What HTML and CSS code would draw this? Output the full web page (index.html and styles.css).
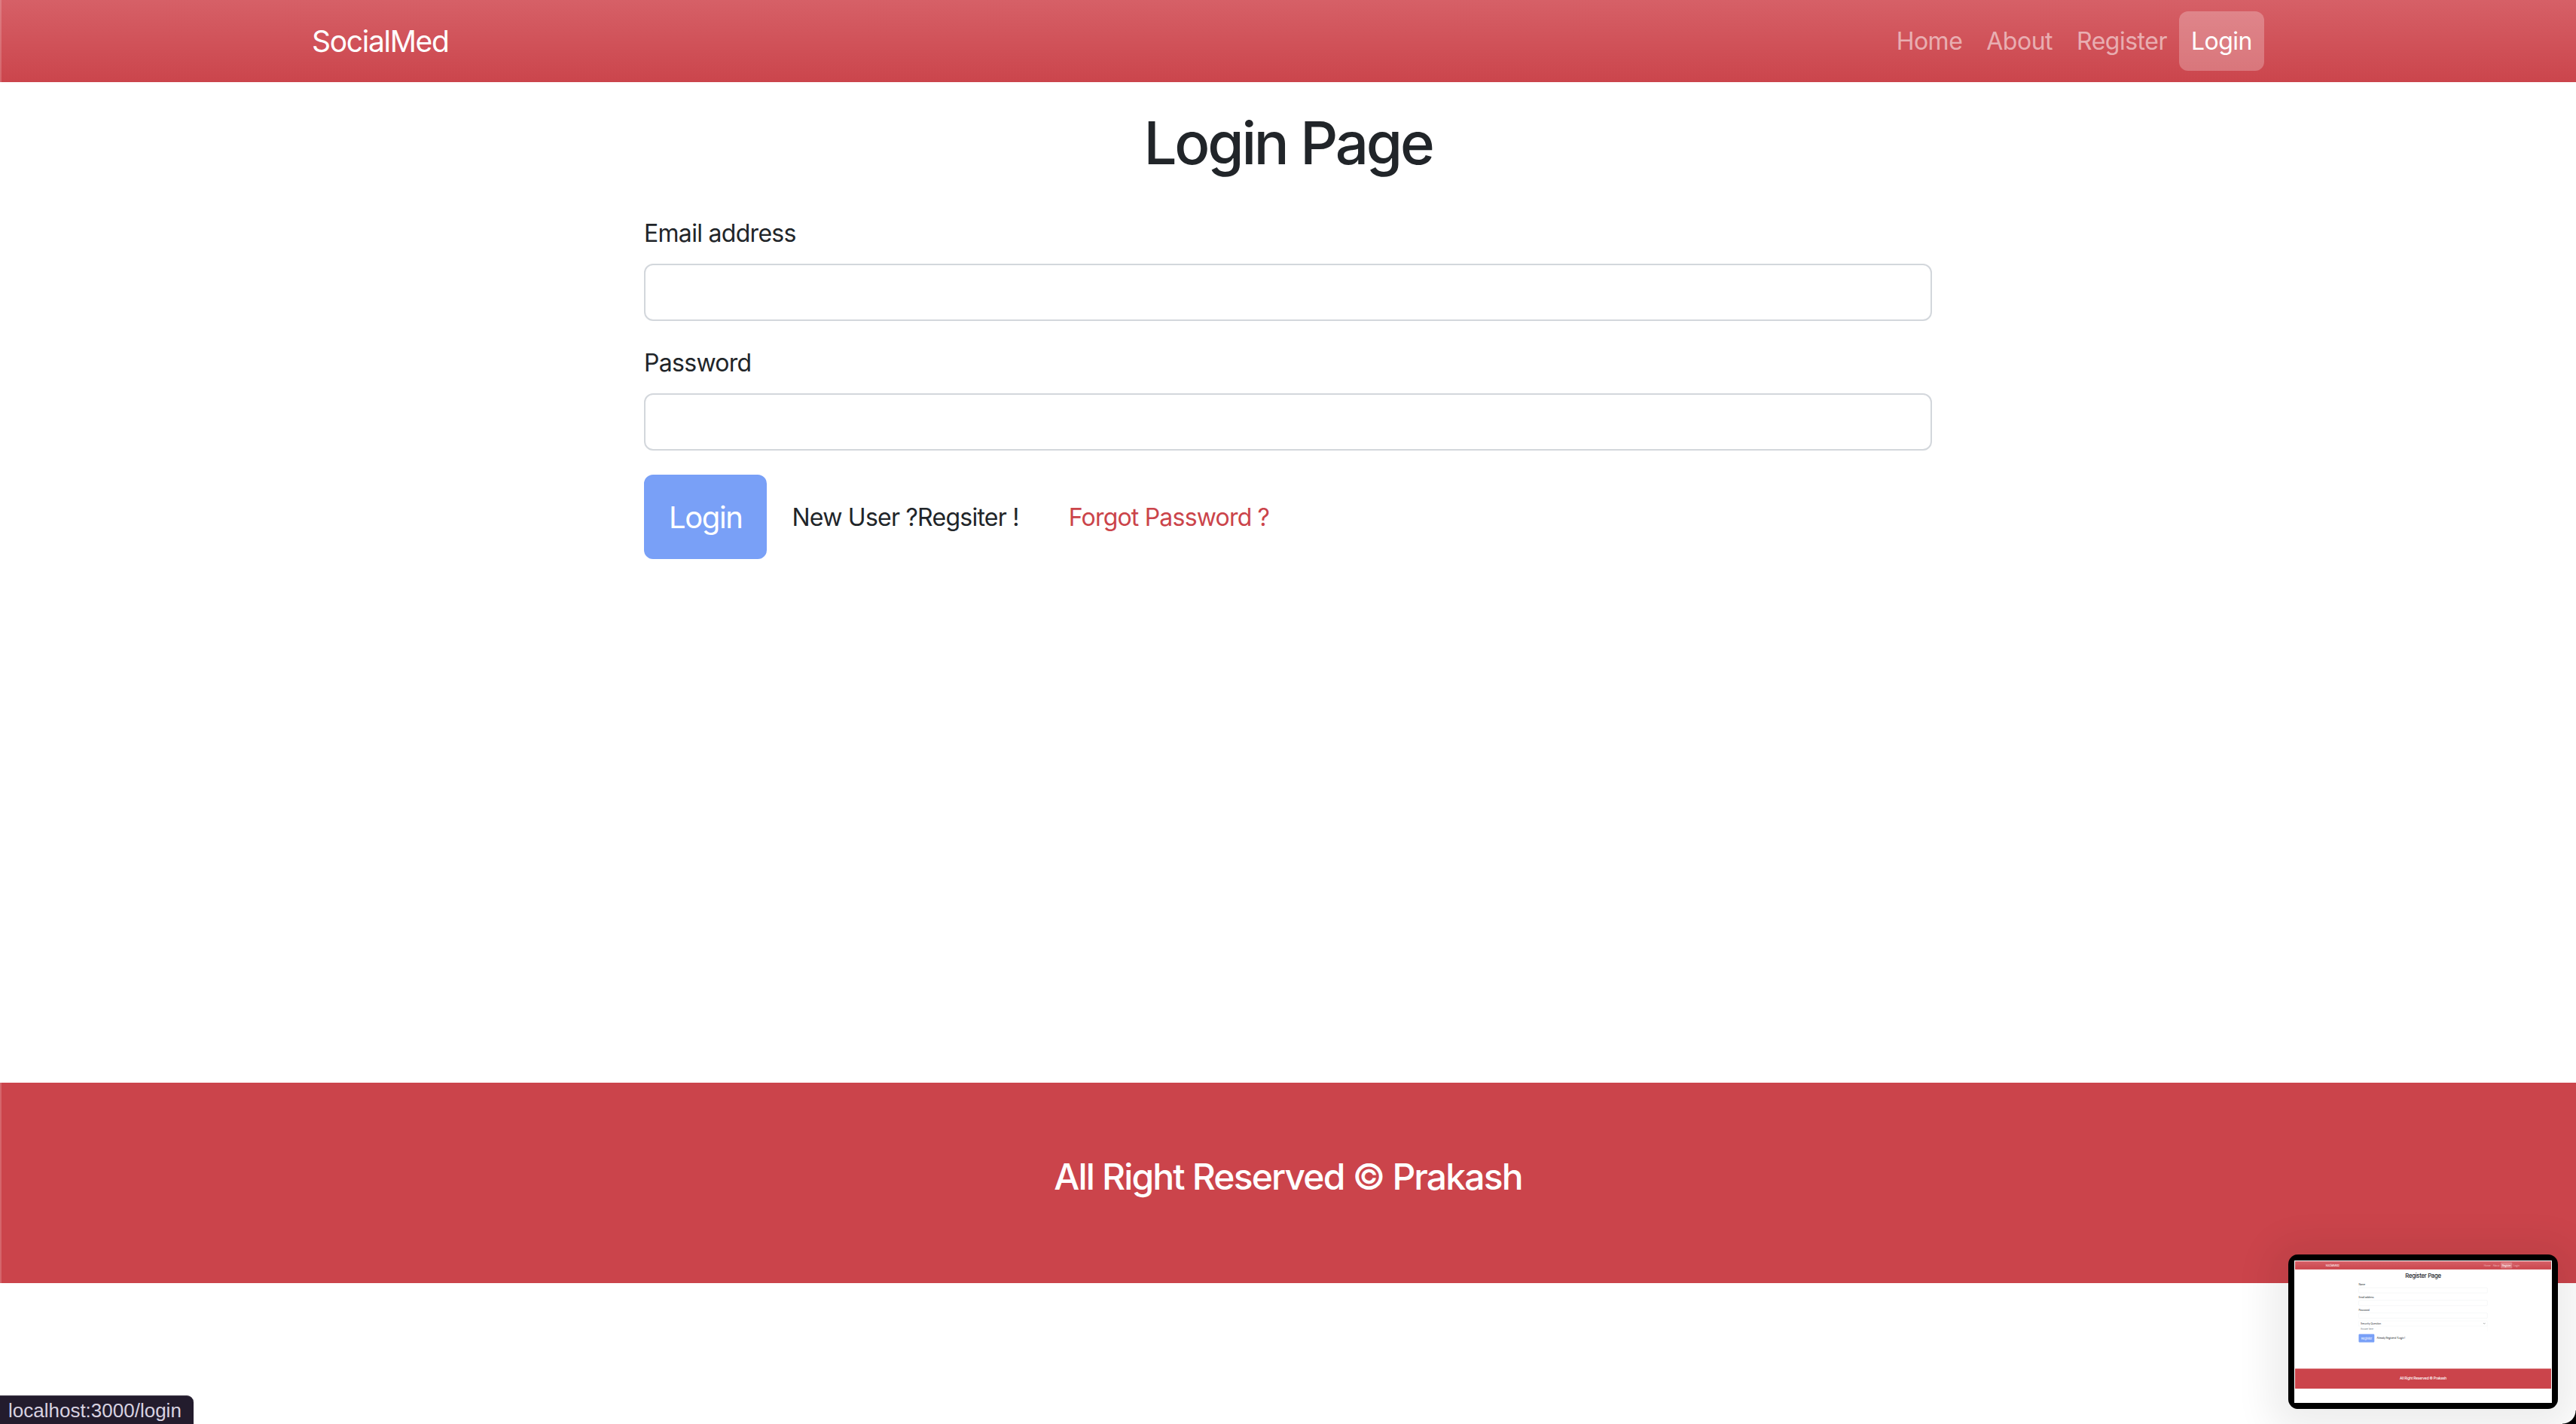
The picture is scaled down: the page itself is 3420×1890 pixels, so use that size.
FILE: index.html
```html
<!DOCTYPE html>
<html lang="en">
<head>
<meta charset="utf-8">
<title>SocialMed - Login</title>
<link rel="stylesheet" href="styles.css">
</head>
<body>
<div class="page">
  <nav class="navbar">
    <div class="container nav-inner">
      <a class="brand" href="#">SocialMed</a>
      <ul class="nav-links">
        <li><a class="nav-link" href="#">Home</a></li>
        <li><a class="nav-link" href="#">About</a></li>
        <li><a class="nav-link" href="#">Register</a></li>
        <li><a class="nav-link active" href="#">Login</a></li>
      </ul>
    </div>
  </nav>
  <main class="main">
    <h1 class="title">Login Page</h1>
    <form class="form">
      <div class="field">
        <label class="label">Email address</label>
        <input class="input" type="email">
      </div>
      <div class="field">
        <label class="label">Password</label>
        <input class="input" type="password">
      </div>
      <div class="actions">
        <button class="btn" type="button">Login</button>
        <span class="hint">New User ?Regsiter !</span>
        <a class="forgot" href="#">Forgot Password ?</a>
      </div>
    </form>
  </main>
  <footer class="footer">
    <h4 class="footer-text">All Right Reserved © Prakash</h4>
  </footer>
</div>

<div class="status">localhost:3000/login</div>

<div class="thumb">
  <div class="thumb-screen">
    <div class="page mini">
      <nav class="navbar">
        <div class="container nav-inner">
          <a class="brand" href="#">SocialMed</a>
          <ul class="nav-links">
            <li><a class="nav-link" href="#">Home</a></li>
            <li><a class="nav-link" href="#">About</a></li>
            <li><a class="nav-link active" href="#">Register</a></li>
            <li><a class="nav-link" href="#">Login</a></li>
          </ul>
        </div>
      </nav>
      <main class="main">
        <h1 class="title">Register Page</h1>
        <form class="form">
          <div class="field">
            <label class="label">Name</label>
            <input class="input" type="text">
          </div>
          <div class="field">
            <label class="label">Email address</label>
            <input class="input" type="email">
          </div>
          <div class="field">
            <label class="label">Password</label>
            <input class="input" type="password">
          </div>
          <div class="field">
            <div class="select-box">
              <span>Security Question</span>
              <svg class="chev" viewBox="0 0 16 16" width="32" height="32"><path d="M2 5l6 6 6-6" fill="none" stroke="#343a40" stroke-width="2" stroke-linecap="round" stroke-linejoin="round"/></svg>
            </div>
            <div class="answer-box">Answer here</div>
          </div>
          <div class="actions">
            <button class="btn" type="button">Register</button>
            <span class="hint">Already Registerd ?Login !</span>
          </div>
        </form>
      </main>
      <footer class="footer">
        <h4 class="footer-text">All Right Reserved © Prakash</h4>
      </footer>
    </div>
  </div>
</div>

<div class="corner"></div>
</body>
</html>
```

FILE: styles.css
```css
* { box-sizing: border-box; }

html, body {
  margin: 0;
  padding: 0;
  background: #ffffff;
}

body {
  font-family: "Inter", "Liberation Sans", sans-serif;
  color: #212529;
  width: 3420px;
  height: 1890px;
  position: relative;
  overflow: hidden;
}

.page {
  width: 3420px;
  background: #ffffff;
}

/* Navbar */
.navbar {
  height: 109px;
  background: linear-gradient(180deg, #d66067 0%, #cb454c 100%);
  display: flex;
  align-items: center;
  box-shadow: inset 2px 0 0 rgba(255, 255, 255, 0.18);
}

.container {
  width: 2592px;
  margin: 0 auto;
}

.nav-inner {
  display: flex;
  align-items: center;
  justify-content: space-between;
}

.brand {
  color: #ffffff;
  text-decoration: none;
  font-size: 39px;
  line-height: 60px;
  letter-spacing: -1.3px;
}

.nav-links {
  list-style: none;
  margin: 0;
  padding: 0;
  display: flex;
  align-items: center;
}

.nav-link {
  display: block;
  height: 79px;
  line-height: 79px;
  padding: 0 16px;
  font-size: 32px;
  letter-spacing: -0.5px;
  color: rgba(255, 255, 255, 0.55);
  text-decoration: none;
  border-radius: 12px;
}

.nav-link.active {
  color: #ffffff;
  background: rgba(255, 255, 255, 0.25);
}

/* Main */
.main {
  min-height: 1328px;
  padding-top: 33px;
}

.title {
  margin: 0 0 48px;
  text-align: center;
  font-size: 78px;
  line-height: 96px;
  font-weight: 500;
  letter-spacing: -3.2px;
  color: #212529;
}

.form {
  width: 1710px;
  margin: 0 auto;
}

.field {
  margin-bottom: 32px;
}

.label {
  display: block;
  font-size: 32px;
  line-height: 48px;
  margin-bottom: 16px;
  letter-spacing: -0.7px;
  color: #212529;
}

.input {
  display: block;
  width: 100%;
  height: 76px;
  border: 2px solid #d3d7dc;
  border-radius: 12px;
  background: #ffffff;
  font-size: 32px;
  padding: 0 24px;
  outline: none;
}

.actions {
  display: flex;
  align-items: center;
}

.btn {
  height: 112px;
  padding: 0 31px;
  border: 2px solid #79a0f7;
  background: #79a0f7;
  color: #ffffff;
  font-family: inherit;
  font-size: 40px;
  letter-spacing: -1.4px;
  border-radius: 12px;
}

.hint {
  margin-left: 33px;
  font-size: 32px;
  letter-spacing: -0.75px;
  color: #212529;
}

.forgot {
  margin-left: 66px;
  font-size: 32px;
  letter-spacing: -0.8px;
  color: #cb444a;
  text-decoration: none;
}

/* Footer */
.footer {
  height: 266px;
  background: #cb444b;
  padding-top: 96px;
  text-align: center;
  box-shadow: inset 2px 0 0 rgba(255, 255, 255, 0.18);
}

.footer-text {
  margin: 0;
  font-size: 48px;
  line-height: 58px;
  font-weight: 500;
  letter-spacing: -1.85px;
  color: #ffffff;
}

/* Status bar */
.status {
  position: absolute;
  left: 0;
  bottom: 0;
  height: 38px;
  padding: 0 16px 0 11px;
  background: #231c2d;
  color: #d8d2e0;
  font-family: "Liberation Sans", sans-serif;
  font-size: 26px;
  line-height: 38px;
  border-top-right-radius: 9px;
  border-top: 1px solid #4a4452;
}

/* Screenshot thumbnail */
.thumb {
  position: absolute;
  left: 3038px;
  top: 1665px;
  width: 358px;
  height: 205px;
  padding: 8px;
  background: #000000;
  border-radius: 13px;
  box-shadow: 0 8px 50px 24px rgba(0, 0, 0, 0.07);
}

.thumb-screen {
  width: 342px;
  height: 189px;
  background: #ffffff;
  overflow: hidden;
  position: relative;
}

.mini {
  transform: scale(0.1);
  transform-origin: 0 0;
  padding: 10px;
  height: 1890px;
}

.mini .main {
  min-height: 1316px;
}

.mini .input {
  height: 72px;
}

.select-box {
  height: 72px;
  border: 2px solid #e2e5e8;
  border-radius: 12px 12px 0 0;
  display: flex;
  align-items: center;
  justify-content: space-between;
  padding: 0 24px;
  font-size: 32px;
}

.answer-box {
  height: 72px;
  border: 2px solid #e2e5e8;
  border-top: none;
  border-radius: 0 0 12px 12px;
  display: flex;
  align-items: center;
  padding: 0 24px;
  font-size: 28px;
  color: #6c757d;
}

.mini .btn {
  height: 110px;
  padding: 0 30px;
}

.corner {
  position: absolute;
  right: 0;
  bottom: 0;
  width: 18px;
  height: 18px;
  background: radial-gradient(circle at 0 0, transparent 17px, #000 18px);
}
```
